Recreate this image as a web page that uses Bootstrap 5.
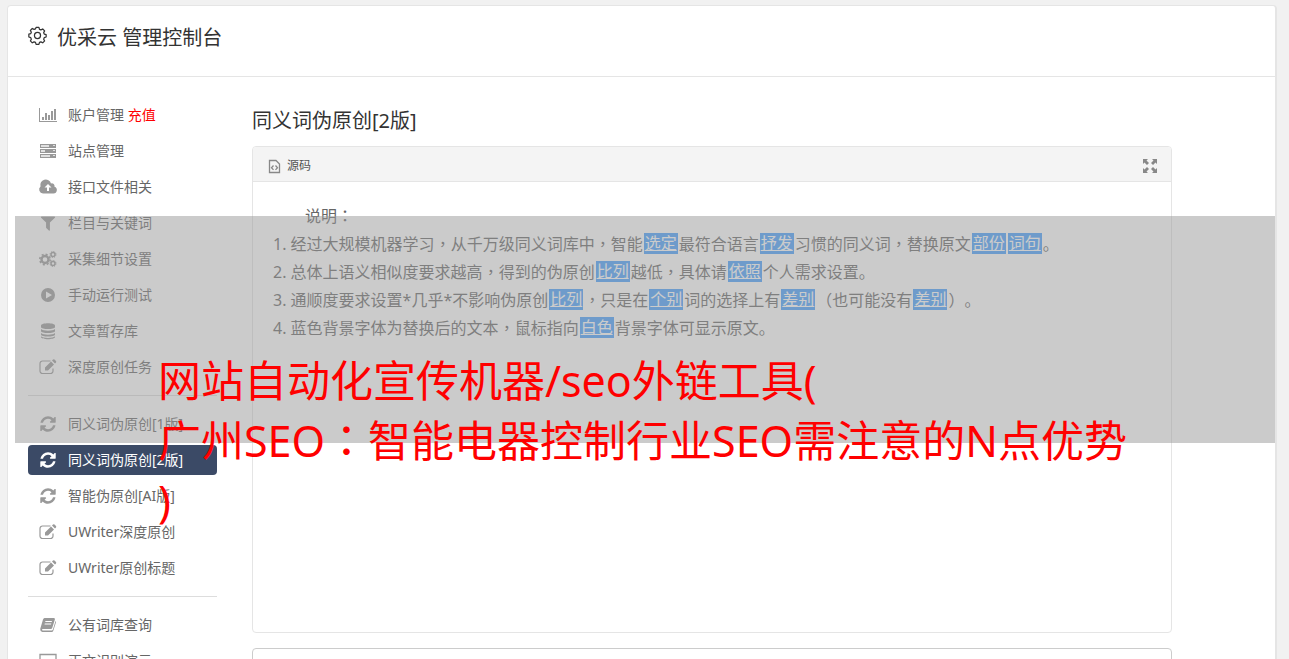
<!DOCTYPE html>
<html lang="zh-CN">
<head>
<meta charset="utf-8">
<meta name="viewport" content="width=device-width, initial-scale=1">
<title>优采云 管理控制台</title>
<link href="https://cdn.jsdelivr.net/npm/bootstrap@5.3.0/dist/css/bootstrap.min.css" rel="stylesheet">
<style>
body{background:#f1f1f1;font-family:"Noto Sans","Noto Sans CJK SC",sans-serif;font-size:14px;color:#333;text-spacing-trim:space-all}
.page-wrap{padding:5px 12px 0 7px}
.console{background:#fff;border:1px solid #e5e5e5;border-right-width:2px;border-radius:4px;min-height:100vh}
.console-head{height:71px;padding:0 20px 6px;gap:10px;border-bottom:1px solid #e5e5e5}
.console-head h1{font-size:20px;line-height:28px}
.console-head svg{margin-bottom:5px}
.console-body{padding:23px 20px 0;gap:35px}
.side{width:189px;gap:6px}
.side a{height:30px;padding-left:10px;gap:10px;color:#666;border-radius:4px;line-height:20px;text-decoration:none;white-space:nowrap}
.side a svg{width:20px;height:18px;fill:#999;color:#999;flex:none}
.side a.active{background:#3b4a66;color:#fff}
.side a.active svg{fill:#fff}
.side .recharge{color:#f00}
.side .split{height:1px;margin:7px 0;background:#ddd}
.work{max-width:920px;min-width:0}
.work h2{font-size:20px;line-height:30px;margin:6px 0 10px}
.editor{border:1px solid #e5e5e5;border-radius:4px}
.editor-head{height:35px;background:#f4f4f4;border-bottom:1px solid #e5e5e5;padding:3px 13px 0 15px;border-radius:3px 3px 0 0}
.editor-head button{font-size:12px;color:#555;gap:6px;line-height:18px}
.editor-body{height:450px;padding:20px;font-size:16px;line-height:28px;color:#666}
.editor-body p{text-indent:2em}
.editor-body ol{list-style-position:inside}
.editor-body a{display:inline-block;line-height:21px;height:21px;padding:0 1px;margin:3px 1px 0;color:#fff;background:#459fff;vertical-align:top}
.mid{font-family:"Noto Sans CJK TC",sans-serif;line-height:1}
.result{height:120px;margin-top:15px;border:1px solid #ccc;border-radius:4px;resize:none}
.banner{top:216px;left:15px;right:14px;height:227px;padding:135px 0 0 143px;background:rgba(151,151,151,.5);pointer-events:none}
.banner p{font-size:43px;line-height:60px;color:#f00;white-space:nowrap}
</style>
</head>
<body>
<svg class="d-none">
<symbol id="i-chart" viewBox="0 0 20 18"><path d="M1 2h1v13h17v1H1zM4 11h2v3H4zM7 7h2v7H7zM10 9h2v5h-2zM13 5h2v9h-2zM16 3h2v11h-2z"/></symbol>
<symbol id="i-server" viewBox="0 0 20 18"><path fill-rule="evenodd" d="M2 2h16v4H2zM3 3v2h8V3zM15 3v1h2V3zM2 7h16v4H2zM3 8v2h4V8zM15 8v1h2V8zM2 12h16v4H2zM3 13v2h9v-2zM15 13v1h2v-1z"/><path opacity=".3" d="M2 2h16v4H2zM2 7h16v4H2zM2 12h16v4H2z"/></symbol>
<symbol id="i-cloud" viewBox="0 0 20 18"><path fill-rule="evenodd" d="M5 15.500A4 4 0 0 1 2.500 8.500 5.300 5.300 0 0 1 13 5.500a2.700 2.700 0 0 1 3.500 3.200A3.500 3.500 0 0 1 15.500 15.500zM10 6 6.500 9.500H9V13h2V9.500h2.500z"/></symbol>
<symbol id="i-filter" viewBox="0 0 1792 1792"><path d="M1595 295q17 41-14 70l-493 493v742q0 42-39 59-13 5-25 5-27 0-45-19l-256-256q-19-19-19-45v-486l-493-493q-31-29-14-70 17-39 59-39h1280q42 0 59 39z"/></symbol>
<symbol id="i-cogs" viewBox="0 0 20 18"><g fill="none" stroke="currentColor"><circle cx="7" cy="9.500" r="3.500" stroke-width="2.400"/><circle cx="7" cy="9.500" r="5.200" stroke-width="1.600" stroke-dasharray="2.040 2.040"/><circle cx="15" cy="4.500" r="2" stroke-width="1.500"/><circle cx="15" cy="4.500" r="3" stroke-width="1" stroke-dasharray="1.180 1.180"/><circle cx="15" cy="13.500" r="2" stroke-width="1.500"/><circle cx="15" cy="13.500" r="3" stroke-width="1" stroke-dasharray="1.180 1.180"/></g></symbol>
<symbol id="i-play" viewBox="0 0 20 18"><path fill-rule="evenodd" d="M10 2a7 7 0 1 0 0 14 7 7 0 0 0 0-14zM8 5.500v7L14 9z"/></symbol>
<symbol id="i-db" viewBox="0 0 20 18"><path d="M3 3.500C3 .5 17 .5 17 3.500V5c0 2.700-14 2.700-14 0zM3 7c2 2.200 12 2.200 14 0v2c0 2.700-14 2.700-14 0zM3 11c2 2.200 12 2.200 14 0v1.500c0 2.700-14 2.700-14 0zM3 14.300c2 2.200 12 2.200 14 0v.7c0 2.900-14 2.900-14 0z"/></symbol>
<symbol id="i-edit" viewBox="0 0 20 18"><path d="M12.500 3H4.500a2.500 2.500 0 0 0-2.500 2.500v7.500a2.500 2.500 0 0 0 2.500 2.500h8a2.500 2.500 0 0 0 2.500-2.500v-2.500" fill="none" stroke="currentColor" stroke-width="1.200"/><path d="M7 12.500v-3l6-6 3 3-6 6zM14 2.500l1-1q.8-.5 1.500 0l1.500 1.500q.5.700 0 1.500l-1 1z"/></symbol>
<symbol id="i-sync" viewBox="0 0 1792 1792"><path d="M1639 1056q0 5-1 7-64 268-268 434.500t-478 166.500q-146 0-282.500-55t-243.500-157l-129 129q-19 19-45 19t-45-19-19-45v-448q0-26 19-45t45-19h448q26 0 45 19t19 45-19 45l-137 137q71 66 161 102t187 36q134 0 250-65t186-179q11-17 53-117 8-23 30-23h192q13 0 22.500 9.500t9.500 22.500zm25-800v448q0 26-19 45t-45 19h-448q-26 0-45-19t-19-45 19-45l138-138q-148-137-349-137-134 0-250 65t-186 179q-11 17-53 117-8 23-30 23h-199q-13 0-22.500-9.500t-9.500-22.500v-7q65-268 270-434.500t480-166.500q146 0 284 55.500t245 156.500l130-129q19-19 45-19t45 19 19 45z"/></symbol>
<symbol id="i-book" viewBox="0 0 20 18"><path fill-rule="evenodd" d="M6.500 2H16q1.200.3.900 1.500l-2.700 8.500q-.4 1-1.400 1H4.500q-1 .5 0 1.500h9.300q.8 0 1.100-1L17.600 5q.6.500.4 1.200L15.200 15q-.4 1-1.500 1H4.300Q2 15.500 2.200 13L5 3.500Q5.500 2 6.500 2zM7.500 5l-.3 1h6.500l.3-1zM6.800 7.500l-.3 1H13l.3-1z"/></symbol>
<symbol id="i-screen" viewBox="0 0 20 18"><path d="M2 2.500h16v11H2zM7 16h6M10 13v3" fill="none" stroke="currentColor" stroke-width="1.300"/></symbol>
</svg>
<div class="position-relative vh-100 overflow-hidden">
<div class="page-wrap">
<div class="console">
<header class="console-head d-flex align-items-center">
<svg width="19" height="19" viewBox="0 0 20 20" fill="none" stroke="#333" stroke-width="1.300"><circle cx="10" cy="10" r="3.200"/><path d="M8.500 1.500h3l.6 2 1.500.6 1.900-1 2 2-1 1.900.6 1.500 2 .6v2.500l-2 .7-.6 1.500 1 1.900-2 2-1.900-1-1.500.6-.6 2h-3l-.6-2-1.500-.6-1.900 1-2-2 1-1.900-.6-1.500-2-.7V8.600l2-.6.600-1.500-1-1.900 2-2 1.900 1 1.500-.6z" stroke-linejoin="round"/></svg>
<h1 class="m-0 fw-normal">优采云 管理控制台</h1>
</header>
<div class="console-body d-flex">
<nav class="side d-flex flex-column flex-shrink-0">
<a class="d-flex align-items-center" href="#"><svg><use href="#i-chart"/></svg><span>账户管理 <span class="recharge">充值</span></span></a>
<a class="d-flex align-items-center" href="#"><svg><use href="#i-server"/></svg>站点管理</a>
<a class="d-flex align-items-center" href="#"><svg><use href="#i-cloud"/></svg>接口文件相关</a>
<a class="d-flex align-items-center" href="#"><svg><use href="#i-filter"/></svg>栏目与关键词</a>
<a class="d-flex align-items-center" href="#"><svg><use href="#i-cogs"/></svg>采集细节设置</a>
<a class="d-flex align-items-center" href="#"><svg><use href="#i-play"/></svg>手动运行测试</a>
<a class="d-flex align-items-center" href="#"><svg><use href="#i-db"/></svg>文章暂存库</a>
<a class="d-flex align-items-center" href="#"><svg><use href="#i-edit"/></svg>深度原创任务</a>
<div class="split"></div>
<a class="d-flex align-items-center" href="#"><svg><use href="#i-sync"/></svg>同义词伪原创[1版]</a>
<a class="d-flex align-items-center active" href="#"><svg><use href="#i-sync"/></svg>同义词伪原创[2版]</a>
<a class="d-flex align-items-center" href="#"><svg><use href="#i-sync"/></svg>智能伪原创[AI版]</a>
<a class="d-flex align-items-center" href="#"><svg><use href="#i-edit"/></svg>UWriter深度原创</a>
<a class="d-flex align-items-center" href="#"><svg><use href="#i-edit"/></svg>UWriter原创标题</a>
<div class="split"></div>
<a class="d-flex align-items-center" href="#"><svg><use href="#i-book"/></svg>公有词库查询</a>
<a class="d-flex align-items-center" href="#"><svg><use href="#i-screen"/></svg>正文识别演示</a>
</nav>
<main class="work flex-grow-1">
<h2 class="fw-normal">同义词伪原创[2版]</h2>
<div class="editor">
<div class="editor-head d-flex align-items-center justify-content-between">
<button type="button" class="btn p-0 border-0 d-flex align-items-center"><svg width="13" height="16" viewBox="0 0 13 16" fill="none" stroke="#888" stroke-width="1.300"><path d="M1.500 2.500H8l3.500 3.500v8.500h-10zM5.500 7.500l-2 2.200 2 2.200M7.500 7.500l2 2.200-2 2.200"/></svg>源码</button>
<button type="button" class="btn p-0 border-0 d-flex" aria-label="全屏"><svg width="16" height="16" viewBox="0 0 16 16" fill="#888"><path d="M1 1h5L4.500 2.500 7 5 5 7 2.500 4.500 1 6zM15 1v5l-1.500-1.500L11 7 9 5l2.500-2.500L10 1zM1 15v-5l1.500 1.500L5 9l2 2-2.500 2.500L6 15zM15 15h-5l1.500-1.500L9 11l2-2 2.500 2.500L15 10z"/></svg></button>
</div>
<div class="editor-body">
<p class="m-0">说明<span class="mid" lang="zh-TW">：</span></p>
<ol class="m-0 p-0">
<li>经过大规模机器学习<span class="mid" lang="zh-TW">，</span>从千万级同义词库中<span class="mid" lang="zh-TW">，</span>智能<a href="#">选定</a>最符合语言<a href="#">抒发</a>习惯的同义词<span class="mid" lang="zh-TW">，</span>替换原文<a href="#">部份</a><a href="#">词句</a>。</li>
<li>总体上语义相似度要求越高<span class="mid" lang="zh-TW">，</span>得到的伪原创<a href="#">比列</a>越低<span class="mid" lang="zh-TW">，</span>具体请<a href="#">依照</a>个人需求设置。</li>
<li>通顺度要求设置*几乎*不影响伪原创<a href="#">比列</a><span class="mid" lang="zh-TW">，</span>只是在<a href="#">个别</a>词的选择上有<a href="#">差别</a><span class="mid" lang="zh-TW">（</span>也可能没有<a href="#">差别</a><span class="mid" lang="zh-TW">）</span>。</li>
<li>蓝色背景字体为替换后的文本<span class="mid" lang="zh-TW">，</span>鼠标指向<a href="#">白色</a>背景字体可显示原文。</li>
</ol>
</div>
</div>
<textarea class="result w-100 d-block" aria-label="结果"></textarea>
</main>
</div>
</div>
</div>
<div class="banner position-absolute">
<p class="m-0">网站自动化宣传机器/seo外链工具(<br>广州SEO<span class="mid" lang="zh-TW">：</span>智能电器控制行业SEO需注意的N点优势<br>)</p>
</div>
</div>
<script src="https://cdn.jsdelivr.net/npm/bootstrap@5.3.0/dist/js/bootstrap.bundle.min.js"></script>
</body>
</html>
